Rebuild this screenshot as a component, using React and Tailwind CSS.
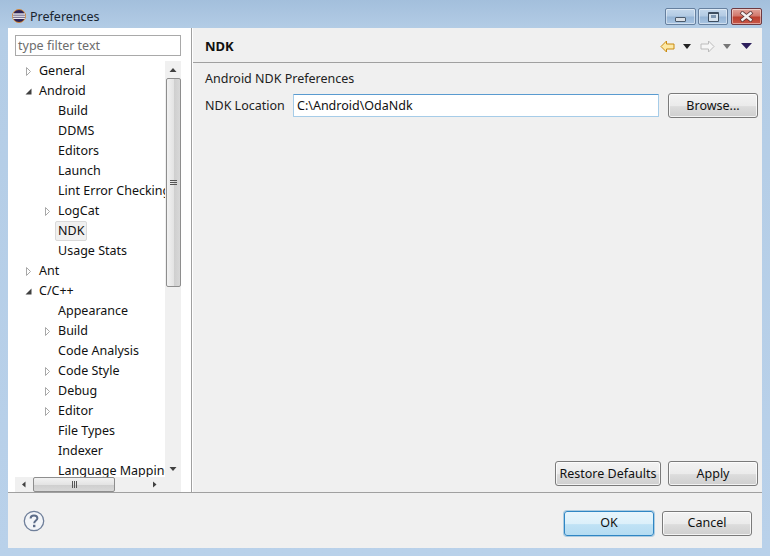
const Right = () => (
  <svg width="7" height="11" viewBox="0 0 7 11" className="block"><path d="M1.5 1.5 L5.5 5.5 L1.5 9.5 Z" fill="#fff" stroke="#a8a8a8" /></svg>
);
const Down = () => (
  <svg width="7" height="7" viewBox="0 0 7 7" className="block"><path d="M6.5 0.5 L6.5 6.5 L0.5 6.5 Z" fill="#404040" /></svg>
);

const rows = [
  [0, "r", "General"], [0, "d", "Android"], [1, "", "Build"], [1, "", "DDMS"], [1, "", "Editors"], [1, "", "Launch"],
  [1, "", "Lint Error Checking"], [1, "r", "LogCat"], [1, "s", "NDK"], [1, "", "Usage Stats"], [0, "r", "Ant"], [0, "d", "C/C++"],
  [1, "", "Appearance"], [1, "r", "Build"], [1, "", "Code Analysis"], [1, "r", "Code Style"], [1, "r", "Debug"], [1, "r", "Editor"],
  [1, "", "File Types"], [1, "", "Indexer"], [1, "", "Language Mapping"],
];

function Row({ level, kind, label }) {
  return (
    <div className={`flex h-5 shrink-0 items-center whitespace-nowrap ${level ? "pl-[29px]" : "pl-[10px]"}`}>
      <span className="flex w-[14px] shrink-0 items-center justify-start">
        {kind === "r" && <Right />}
        {kind === "d" && <Down />}
      </span>
      {kind === "s" ? (
        <span className="-mx-[3px] rounded-[2px] border border-[#d9d9d9] bg-[#f0f0f0] px-[2px] leading-[18px]">{label}</span>
      ) : (
        <span>{label}</span>
      )}
    </div>
  );
}

function Btn({ w, h = "h-[25px]", children, primary, pad = "pt-0" }) {
  const cls = primary
    ? "border-[#2f86c4] bg-[linear-gradient(#e8f5fc_0%,#dcf0fa_50%,#bfe2f5_55%,#b5dcf2_100%)] shadow-[0_0_0_1px_rgba(47,134,196,0.35)]"
    : "border-[#7a7a7a] bg-[linear-gradient(#f3f3f3_0%,#ebebeb_50%,#dcdcdc_55%,#cfcfcf_100%)] shadow-[inset_0_0_0_1px_rgba(255,255,255,0.75)]";
  return (
    <div className={`flex ${w} ${h} ${pad} shrink-0 items-center justify-center rounded-[3px] border text-[#111] ${cls}`}>
      {children}
    </div>
  );
}

function WinBtn({ w, children, close }) {
  const cls = close
    ? "border-[#6e3a42] bg-[linear-gradient(#e0a49b_0%,#d2786c_45%,#bb3f2e_55%,#c9584a_100%)]"
    : "border-[#66809f] bg-[linear-gradient(#c4d8ec_0%,#b3cbe4_45%,#96b5d6_55%,#a9c5e2_100%)]";
  return (
    <div className={`flex ${w} h-[17px] items-center justify-center rounded-[2px] border shadow-[inset_0_0_0_1px_rgba(255,255,255,0.45)] ${cls}`}>
      {children}
    </div>
  );
}

const Tri = ({ color = "#333" }) => (
  <svg width="8" height="5" viewBox="0 0 8 5" className="block"><path d="M0 0 H8 L4 5 Z" fill={color} /></svg>
);

export default function App() {
  return (
    <div className="flex h-[556px] w-[770px] flex-col overflow-hidden bg-[linear-gradient(#a3bfdc_0px,#b4cde6_30px,#b9d1ea_100%)] text-[12.5px] text-[#111] [font-family:'Noto_Sans','Open_Sans',sans-serif]">
      {/* title bar */}
      <div className="flex h-7 shrink-0 items-start pl-[12px] pr-2 pt-[8px]">
        <svg width="14" height="14" viewBox="0 0 14 14" className="mr-[4px] mt-px shrink-0">
          <circle cx="7" cy="7" r="6.5" fill="#2c2255" stroke="#e08a2c" strokeWidth="0.9" />
          <rect x="1" y="4.4" width="12" height="1.3" fill="#fff" />
          <rect x="0.8" y="6.5" width="12.4" height="1.3" fill="#fff" />
          <rect x="1.2" y="8.6" width="11.6" height="1.3" fill="#fff" />
        </svg>
        <span className="text-[12.5px] leading-[17px] text-[#1a2530]">Preferences</span>
        <div className="ml-auto flex gap-[2px]">
          <WinBtn w="w-[31px]"><div className="mt-[5px] h-[5px] w-[11px] rounded-[1px] border border-[#4a5a6c] bg-[#d9dfe6]" /></WinBtn>
          <WinBtn w="w-[30px]"><div className="h-[10px] w-[11px] rounded-[1px] border border-t-2 border-[#3d4d60] bg-[#d6e2ee]"><div className="mx-auto mt-[1px] h-[3px] w-[5px] bg-[#7f97b2]" /></div></WinBtn>
          <div className="ml-[1px]">
            <WinBtn w="w-[31px]" close>
              <svg width="15" height="11" viewBox="0 0 15 11"><path d="M2 1 L13 10 M13 1 L2 10" stroke="#5a3434" strokeWidth="4" /><path d="M2.5 1.5 L12.5 9.5 M12.5 1.5 L2.5 9.5" stroke="#f4f0f0" strokeWidth="2.4" /></svg>
            </WinBtn>
          </div>
        </div>
      </div>

      {/* client */}
      <div className="mx-2 mb-2 flex min-h-0 flex-1 flex-col bg-[#f0f0f0]">
        <div className="flex min-h-0 flex-1">
          {/* left */}
          <div className="flex w-[183px] shrink-0 flex-col bg-white pl-[7px] pr-[10px] pt-[7px]">
            <div className="flex h-[21px] shrink-0 items-center border border-[#a9a9a9] pl-[2px] pt-[2px] text-[#6d6d6d]">type filter text</div>
            <div className="mt-[5px] flex min-h-0 flex-1">
              <div className="flex min-w-0 flex-1 flex-col">
                <div className="min-h-0 flex-1 overflow-hidden pr-px">
                  {rows.map((r, i) => <Row key={i} level={r[0]} kind={r[1]} label={r[2]} />)}
                </div>
                <div className="flex h-[15px] shrink-0 items-center bg-[#f0f0f0]">
                  <svg width="18" height="15" viewBox="0 0 18 15" className="shrink-0"><path d="M10.5 4.5 V10.5 L7 7.5 Z" fill="#404040" /></svg>
                  <div className="flex h-[15px] w-[82px] shrink-0 items-center justify-center rounded-[2px] border border-[#8e8e8e] bg-[linear-gradient(#f2f2f2,#e4e4e4_50%,#cfcfcf_55%,#d8d8d8)] text-[0px]">
                    <div className="flex gap-px"><i className="h-[7px] w-px bg-[#555]" /><i className="h-[7px] w-px bg-[#555]" /><i className="h-[7px] w-px bg-[#555]" /></div>
                  </div>
                  <div className="flex-1" />
                  <svg width="14" height="15" viewBox="0 0 14 15" className="mr-[3px] shrink-0"><path d="M5 4.5 V10.5 L8.5 7.5 Z" fill="#404040" /></svg>
                </div>
              </div>
              <div className="flex w-[16px] shrink-0 flex-col items-center bg-[#f0f0f0] pb-[15px] pt-[1px]">
                <svg width="14" height="16" viewBox="0 0 14 16" className="shrink-0"><path d="M3.5 10 H10.5 L7 6 Z" fill="#404040" /></svg>
                <div className="flex h-[209px] w-[15px] shrink-0 items-center justify-center rounded-[2px] border border-[#8e8e8e] bg-[linear-gradient(90deg,#f2f2f2,#e4e4e4_50%,#cfcfcf_55%,#d8d8d8)]">
                  <div className="flex flex-col gap-px"><i className="h-px w-[7px] bg-[#555]" /><i className="h-px w-[7px] bg-[#555]" /><i className="h-px w-[7px] bg-[#555]" /></div>
                </div>
                <div className="flex-1" />
                <svg width="14" height="16" viewBox="0 0 14 16" className="shrink-0"><path d="M3.5 6 H10.5 L7 10 Z" fill="#404040" /></svg>
              </div>
            </div>
          </div>
          <div className="w-px shrink-0 bg-[#a0a0a0]" />
          <div className="w-px shrink-0 bg-white" />
          {/* right */}
          <div className="flex min-w-0 flex-1 flex-col">
            <div className="flex h-[35px] shrink-0 items-center border-b border-[#a0a0a0] pl-[12px] pr-[10px]">
              <span className="pt-[4px] text-[13px] font-bold text-[#111]">NDK</span>
              <div className="ml-auto flex items-center pt-[2px]">
                <svg width="15" height="13" viewBox="0 0 15 13" className="block"><path d="M6.5 1 L1 6.5 L6.5 12 V9 H14 V4 H6.5 Z" fill="#fde9a6" stroke="#c98a10" strokeLinejoin="round" /></svg>
                <span className="ml-[8px]"><Tri color="#222" /></span>
                <svg width="15" height="13" viewBox="0 0 15 13" className="ml-[9px] block"><path d="M8.5 1 L14 6.5 L8.5 12 V9 H1 V4 H8.5 Z" fill="#f6f6f6" stroke="#bcbcbc" strokeLinejoin="round" /></svg>
                <span className="ml-[8px]"><Tri color="#777" /></span>
                <span className="ml-[10px]"><svg width="11" height="6" viewBox="0 0 11 6" className="block"><path d="M0 0 H11 L5.5 6 Z" fill="#2c1f5c" /></svg></span>
              </div>
            </div>
            <div className="flex min-h-0 flex-1 flex-col pl-[12px] pr-[4px]">
              <div className="mt-[6px] leading-[20px] text-[#222]">Android NDK Preferences</div>
              <div className="mt-[4px] flex items-center">
                <span className="w-[88px] shrink-0 pt-[2px] text-[#222]">NDK Location</span>
                <div className="flex h-[23px] w-[366px] shrink-0 items-center rounded-[1px] border border-x-[#a6cce8] border-b-[#a6cce8] border-t-[#5a9bd0] bg-white pl-[3px] pt-[2px]">C:\Android\OdaNdk</div>
                <div className="ml-[9px]"><Btn w="w-[90px]" pad="pt-[2px]">Browse...</Btn></div>
              </div>
              <div className="flex-1" />
              <div className="mb-[6px] flex justify-end gap-[7px]">
                <Btn w="w-[106px]" pad="pt-[2px]">Restore Defaults</Btn>
                <Btn w="w-[90px]" pad="pt-[2px]">Apply</Btn>
              </div>
            </div>
          </div>
        </div>
        {/* bottom */}
        <div className="flex h-[56px] shrink-0 items-start border-t border-[#a0a0a0] pl-[15px] pr-[10px]">
          <svg width="22" height="22" viewBox="0 0 22 22" className="mt-[17px] shrink-0">
            <circle cx="11" cy="11" r="9.7" fill="#f3f5f8" stroke="#6f7f9a" strokeWidth="1.3" />
            <path d="M7.6 8.4 C7.6 6.4 9.2 5.4 11 5.4 C13 5.4 14.4 6.6 14.4 8.2 C14.4 10.4 11.2 10.6 11.2 13.2" fill="none" stroke="#5c6c88" strokeWidth="2" />
            <rect x="10" y="14.8" width="2.4" height="2.4" fill="#5c6c88" />
          </svg>
          <div className="ml-auto mt-[18px] flex gap-[8px]">
            <Btn w="w-[90px]" primary>OK</Btn>
            <Btn w="w-[90px]">Cancel</Btn>
          </div>
        </div>
      </div>
    </div>
  );
}
